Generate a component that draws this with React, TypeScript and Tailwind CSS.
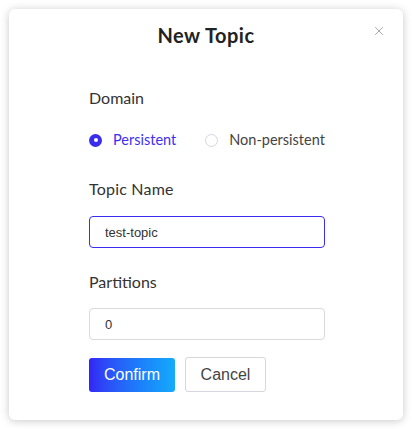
import { X } from "lucide-react";

export default function App() {
  return (
    <div className="min-h-screen bg-white pt-[9px] pl-[9px]">
      <div
        className="relative w-[394px] h-[411px] rounded-[6px] bg-white shadow-[0_1px_8px_rgba(0,0,0,0.22)]"
        style={{ fontFamily: "Lato, 'Noto Sans', sans-serif" }}
      >
        {/* header */}
        <h2 className="pt-[14px] pb-[1px] text-center text-[20px] leading-[24px] font-bold tracking-[0.5px] text-[#222]">New Topic</h2>
        <button className="absolute top-[15px] right-[17px] text-[#8a8a8a]">
          <X size={14} strokeWidth={1.3} />
        </button>

        <div className="pl-[80px] w-[316px]">
          {/* Domain */}
          <div className="mt-[40px] text-[16px] leading-[20px] text-[#333]">Domain</div>
          <div className="mt-[22px] flex items-center h-[20px] text-[14.5px]">
            <div className="flex items-center">
              <span className="flex items-center justify-center w-[13px] h-[13px] rounded-full bg-[#3a2df0]">
                <span className="w-[4px] h-[4px] rounded-full bg-white" />
              </span>
              <span className="ml-[11px] text-[#3d30f2]">Persistent</span>
            </div>
            <div className="ml-[29px] flex items-center">
              <span className="w-[13px] h-[13px] rounded-full border border-[#d5d5de] bg-white" />
              <span className="ml-[11px] text-[#444]">Non-persistent</span>
            </div>
          </div>

          {/* Topic Name */}
          <div className="mt-[29px] text-[16px] leading-[20px] tracking-[0.2px] text-[#333]">Topic Name</div>
          <input
            defaultValue="test-topic"
            className="mt-[17px] block w-[236px] h-[32px] px-[15px] rounded-[4px] border border-[#3a2df0] text-[13px] text-[#333] outline-none"
            style={{ fontFamily: "'Liberation Sans', Arial, sans-serif" }}
          />

          {/* Partitions */}
          <div className="mt-[24px] text-[16px] leading-[20px] text-[#333]">Partitions</div>
          <input
            defaultValue="0"
            className="mt-[16px] block w-[236px] h-[32px] px-[15px] rounded-[4px] border border-[#d9d9e0] text-[13px] text-[#333] outline-none"
            style={{ fontFamily: "'Liberation Sans', Arial, sans-serif" }}
          />

          {/* buttons */}
          <div
            className="mt-[18px] flex gap-[10px]"
            style={{ fontFamily: "'Liberation Sans', Arial, sans-serif" }}
          >
            <button className="w-[86px] h-[34px] rounded-[3px] bg-gradient-to-r from-[#3323f5] to-[#15abfb] text-white text-[16px]">
              Confirm
            </button>
            <button className="w-[81px] h-[35px] -mt-[1px] rounded-[3px] border border-[#d6d6de] bg-white text-[#444] text-[16px]">
              Cancel
            </button>
          </div>
        </div>
      </div>
    </div>
  );
}
